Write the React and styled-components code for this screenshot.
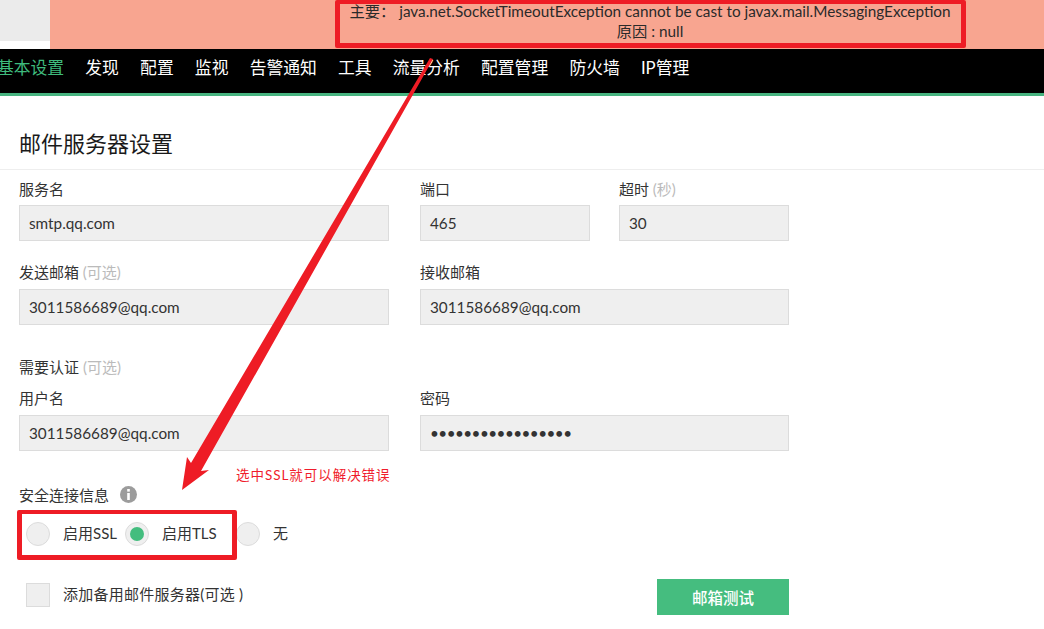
import React from 'react';
import styled, { createGlobalStyle } from 'styled-components';

const GlobalStyle = createGlobalStyle`
  html, body { margin: 0; padding: 0; background: #fff; overflow: hidden; }
  body { font-family: Lato, "Noto Sans CJK SC", sans-serif; color: #222; }
`;

const Page = styled.div`
  position: relative;
  width: 1044px;
  height: 629px;
  overflow: hidden;
`;

const Top = styled.div`
  display: flex;
  height: 49px;
`;

const Corner = styled.div`
  width: 50px;
  height: 41px;
  background: #ebebeb;
`;

const Banner = styled.div`
  flex: 1;
  background: #f8a590;
  padding: 1px 0 0 299px;
  text-align: center;
  font-size: 15.3px;
  line-height: 20px;
  color: #2a2a2a;
`;

const BannerText = styled.div`
  width: 602px;
  white-space: nowrap;
`;

const Nav = styled.nav`
  display: flex;
  align-items: center;
  gap: 21.2px;
  height: 36px;
  padding-bottom: 8px;
  background: #000;
  border-bottom: 3px solid #46b37f;
`;

const NavItem = styled.span`
  font-size: 16.8px;
  white-space: nowrap;
  color: ${p => (p.$active ? '#3fbb7d' : '#fff')};
  margin-left: ${p => (p.$active ? '-3px' : '0')};
`;

const Title = styled.h1`
  margin: 0;
  padding: 32px 0 10px 19px;
  height: 31px;
  line-height: 31px;
  font-size: 22px;
  font-weight: 400;
  color: #1a1a1a;
  border-bottom: 1px solid #eee;
`;

const Form = styled.form`
  display: flex;
  flex-direction: column;
  padding-left: 19px;
  width: 770px;
`;

const Row = styled.div`
  display: flex;
  gap: 31px;
  margin-top: ${p => p.$top || 0}px;
`;

const Pair = styled.div`
  display: flex;
  gap: 29px;
  width: 369px;
`;

const Field = styled.div`
  display: flex;
  flex-direction: column;
  width: ${p => p.$w}px;
`;

const Label = styled.label`
  display: block;
  height: 20px;
  line-height: 18px;
  font-size: 15px;
  color: #333;
  margin-bottom: ${p => p.$gap ?? 5}px;
`;

const Optional = styled.span`
  color: #bbb;
`;

const Input = styled.div`
  box-sizing: border-box;
  height: 36px;
  line-height: 35px;
  padding-left: 9px;
  background: #efefef;
  border: 1px solid #dcdcdc;
  font-size: 15.3px;
  color: #333;
`;

const Dots = styled(Input)`
  letter-spacing: -0.55px;
`;

const Section = styled.div`
  display: flex;
  align-items: center;
  gap: ${p => p.$gap}px;
  margin-top: ${p => p.$top}px;
  height: 20px;
  font-size: 15px;
  color: #333;
`;

const InfoIcon = styled.svg`
  width: 17px;
  height: 17px;
`;

const Radios = styled.div`
  display: flex;
  align-items: center;
  margin: 18px 0 0 7px;
  height: 24px;
  font-size: 15px;
  color: #333;
`;

const Radio = styled.span`
  display: flex;
  align-items: center;
  justify-content: center;
  box-sizing: border-box;
  width: 24px;
  height: 24px;
  border-radius: 50%;
  background: #efefef;
  border: 1px solid #dcdcdc;
  &::after {
    content: '';
    display: ${p => (p.$on ? 'block' : 'none')};
    width: 14px;
    height: 14px;
    border-radius: 50%;
    background: #43bd7e;
  }
`;

const RadioText = styled.span`
  margin-left: 13px;
  padding-bottom: 4px;
  width: ${p => p.$w}px;
`;

const Bottom = styled.div`
  display: flex;
  align-items: center;
  justify-content: space-between;
  margin: 33px 0 0 7px;
  height: 36px;
  width: 763px;
`;

const Check = styled.div`
  display: flex;
  align-items: center;
  gap: 13px;
  margin-top: -4px;
  font-size: 15px;
  color: #333;
`;

const CheckText = styled.span`
  padding-bottom: 4px;
  letter-spacing: 0.25px;
`;

const Box = styled.span`
  box-sizing: border-box;
  width: 24px;
  height: 24px;
  background: #efefef;
  border: 1px solid #dcdcdc;
`;

const TestButton = styled.button`
  width: 132px;
  height: 36px;
  border: 0;
  background: #45bd7f;
  color: #fff;
  font-family: inherit;
  font-size: 15.5px;
  font-weight: 500;
`;

const Note = styled.div`
  position: absolute;
  left: 236px;
  top: 466px;
  font-size: 13.5px;
  line-height: 18px;
  letter-spacing: 0.95px;
  color: #f01c2c;
`;

const RedBox = styled.div`
  position: absolute;
  box-sizing: border-box;
  left: ${p => p.$x}px;
  top: ${p => p.$y}px;
  width: ${p => p.$w}px;
  height: ${p => p.$h}px;
  border: 5px solid #ee1c25;
  border-top-width: 4px;
  border-radius: 2px;
`;

const ArrowSvg = styled.svg`
  position: absolute;
  left: 0;
  top: 0;
`;

const navItems = ['发现', '配置', '监视', '告警通知', '工具', '流量分析', '配置管理', '防火墙', 'IP管理'];

export default function App() {
  return (
    <Page>
      <GlobalStyle />
      <Top>
        <Corner />
        <Banner>
          <BannerText>
            <div>主要： java.net.SocketTimeoutException cannot be cast to javax.mail.MessagingException</div>
            <div>原因 : null</div>
          </BannerText>
        </Banner>
      </Top>
      <Nav>
        <NavItem $active>基本设置</NavItem>
        {navItems.map(item => <NavItem key={item}>{item}</NavItem>)}
      </Nav>
      <Title>邮件服务器设置</Title>
      <Form>
        <Row $top={10}>
          <Field $w={370}>
            <Label>服务名</Label>
            <Input>smtp.qq.com</Input>
          </Field>
          <Pair>
            <Field $w={170}>
              <Label>端口</Label>
              <Input>465</Input>
            </Field>
            <Field $w={170}>
              <Label>超时 <Optional>(秒)</Optional></Label>
              <Input>30</Input>
            </Field>
          </Pair>
        </Row>
        <Row $top={22}>
          <Field $w={370}>
            <Label $gap={6}>发送邮箱 <Optional>(可选)</Optional></Label>
            <Input>3011586689@qq.com</Input>
          </Field>
          <Field $w={369}>
            <Label $gap={6}>接收邮箱</Label>
            <Input>3011586689@qq.com</Input>
          </Field>
        </Row>
        <Section $top={31} $gap={4}>需要认证 <Optional>(可选)</Optional></Section>
        <Row $top={13}>
          <Field $w={370}>
            <Label $gap={6}>用户名</Label>
            <Input>3011586689@qq.com</Input>
          </Field>
          <Field $w={369}>
            <Label $gap={6}>密码</Label>
            <Dots>•••••••••••••••••</Dots>
          </Field>
        </Row>
        <Section $top={33} $gap={11}>
          安全连接信息
          <InfoIcon viewBox="0 0 17 17">
            <circle cx="8.5" cy="8.5" r="8.5" fill="#9c9c9c" />
            <rect x="7.2" y="3" width="2.6" height="2.6" fill="#fff" />
            <rect x="7.2" y="7" width="2.6" height="7" fill="#fff" />
          </InfoIcon>
        </Section>
        <Radios>
          <Radio />
          <RadioText $w={62}>启用SSL</RadioText>
          <Radio $on />
          <RadioText $w={74}>启用TLS</RadioText>
          <Radio />
          <RadioText>无</RadioText>
        </Radios>
        <Bottom>
          <Check>
            <Box />
            <CheckText>添加备用邮件服务器(可选 )</CheckText>
          </Check>
          <TestButton type="button">邮箱测试</TestButton>
        </Bottom>
      </Form>

      <Note>选中SSL就可以解决错误</Note>
      <RedBox $x={335} $y={0} $w={631} $h={48} />
      <RedBox $x={17} $y={510} $w={220} $h={50} />
      <ArrowSvg width="1044" height="629" viewBox="0 0 1044 629">
        <polygon points="430,58 433,59 201,471 209,470 182,490 187,457 191,463" fill="#ee1c25" />
      </ArrowSvg>
    </Page>
  );
}
